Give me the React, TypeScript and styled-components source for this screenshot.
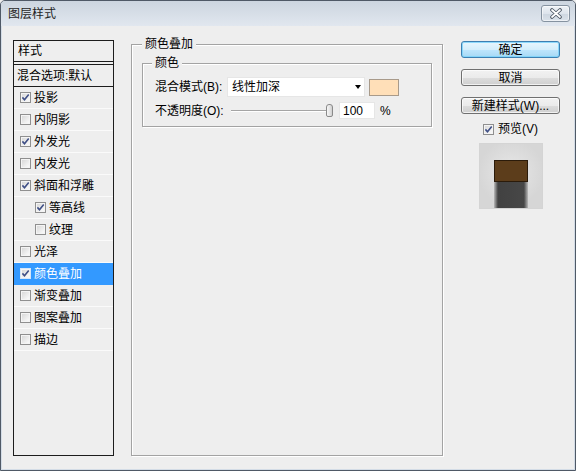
import React from "react";
import styled, { createGlobalStyle } from "styled-components";

const FONT = `"Liberation Sans", "Noto Sans CJK SC", sans-serif`;

const GlobalStyle = createGlobalStyle`
  html, body { margin: 0; padding: 0; background: #eeeeee; }
  body {
    width: 576px; height: 471px; overflow: hidden;
    font-family: ${FONT}; font-size: 12px; color: #000;
  }
  * { box-sizing: border-box; }
`;

const Window = styled.div`
  width: 576px;
  height: 471px;
  display: flex;
  flex-direction: column;
  border: 1px solid #4f5966;
  border-radius: 5px 5px 0 0;
  background: #d3dce6;
  overflow: hidden;
`;

const TitleBar = styled.div`
  height: 25px;
  flex: none;
  display: flex;
  align-items: flex-start;
  justify-content: space-between;
  padding: 0 5px 0 7px;
  background: linear-gradient(#ccd5df, #e1e7ef);
`;

const Title = styled.span`
  margin-top: 6px;
  line-height: 14px;
  font-size: 12px;
  color: #1f1f1f;
`;

const CloseButton = styled.div`
  margin-top: 4px;
  width: 29px;
  height: 17px;
  display: flex;
  align-items: center;
  justify-content: center;
  border: 1px solid #8592a0;
  border-radius: 3px;
  background: linear-gradient(#eef2f6, #dde4ec 50%, #cdd6e0 51%, #dae2ea);
  box-shadow: inset 0 0 0 1px rgba(255, 255, 255, 0.55);
`;

const Body = styled.div`
  flex: 1;
  margin: 0 1px 1px 1px;
  display: flex;
  align-items: stretch;
  padding: 0 0 13px 11px;
  background: #eeeeee;
`;

/* ---------- style list ---------- */

const StyleList = styled.div`
  margin-top: 14px;
  width: 101px;
  flex: none;
  display: flex;
  flex-direction: column;
  border: 1px solid #1c1c1c;
  background: #eeeeee;
`;

const ListHeader = styled.div`
  height: 21px;
  flex: none;
  display: flex;
  align-items: center;
  padding-left: 4px;
  border-bottom: 1px solid #1c1c1c;
  margin-bottom: 2px;
  line-height: 14px;
`;

const ListBody = styled.div`
  border-top: 1px solid #1c1c1c;
  display: flex;
  flex-direction: column;
`;

const BlendRow = styled.div`
  height: 22px;
  display: flex;
  align-items: center;
  padding-left: 3px;
  border-bottom: 1px solid #1c1c1c;
  line-height: 14px;
  white-space: nowrap;
`;

const ItemRow = styled.div<{ $indent?: boolean; $active?: boolean }>`
  height: 22px;
  display: flex;
  align-items: center;
  gap: 3px;
  padding-left: ${(p) => (p.$indent ? 21 : 6)}px;
  border-bottom: 1px solid ${(p) => (p.$active ? "#3399ff" : "#fafafa")};
  background: ${(p) => (p.$active ? "#3399ff" : "transparent")};
  color: ${(p) => (p.$active ? "#ffffff" : "#000000")};
  line-height: 14px;
  white-space: nowrap;
`;

const Box = styled.span<{ $light?: boolean }>`
  width: 11px;
  height: 11px;
  flex: none;
  display: flex;
  align-items: center;
  justify-content: center;
  border: 1px solid ${(p) => (p.$light ? "#d6e6f8" : "#8f8f8f")};
  background: linear-gradient(135deg, #d4d4d4, #f6f6f6 80%);
  box-shadow: inset 0 0 0 1px #f4f4f4;
`;

const CheckBox: React.FC<{ checked?: boolean; light?: boolean }> = ({
  checked,
  light,
}) => (
  <Box $light={light}>
    {checked && (
      <svg width="9" height="9" viewBox="0 0 9 9">
        <path
          d="M1.4 4.4 L3.5 6.7 L7.7 1.6"
          fill="none"
          stroke="#3f4f86"
          strokeWidth="1.6"
        />
      </svg>
    )}
  </Box>
);

/* ---------- centre panel ---------- */

const Group = styled.fieldset`
  margin: 11px 0 0 17px;
  width: 312px;
  flex: none;
  min-width: 0;
  padding: 0 10px 0 10px;
  border: 1px solid #a3a3a3;
  box-shadow: inset 1px 1px 0 #ffffff, 1px 1px 0 #ffffff;
  display: flex;
  flex-direction: column;
`;

const Legend = styled.legend<{ $shift?: number }>`
  padding: 0 3px;
  margin-left: ${(p) => p.$shift ?? 0}px;
  line-height: 14px;
  background: #eeeeee;
`;

const SubGroup = styled.fieldset`
  margin: 5px 0 0 0;
  min-width: 0;
  padding: 7px 0 7px 12px;
  border: 1px solid #a3a3a3;
  box-shadow: inset 1px 1px 0 #ffffff, 1px 1px 0 #ffffff;
  display: flex;
  flex-direction: column;
  gap: 5px;
`;

const FieldRow = styled.div<{ $h: number }>`
  height: ${(p) => p.$h}px;
  display: flex;
  align-items: center;
`;

const FieldLabel = styled.span`
  width: 72px;
  flex: none;
  line-height: 14px;
  white-space: nowrap;
`;

const Select = styled.div`
  width: 138px;
  height: 20px;
  display: flex;
  align-items: center;
  justify-content: space-between;
  padding: 0 3px 0 4px;
  background: #ffffff;
  border: 1px solid #e6e6e6;
  line-height: 14px;
`;

const Caret = styled.span`
  width: 0;
  height: 0;
  border-left: 3.5px solid transparent;
  border-right: 3.5px solid transparent;
  border-top: 4px solid #000;
`;

const Swatch = styled.div<{ $color: string }>`
  margin-left: 4px;
  width: 30px;
  height: 17px;
  border: 1px solid #a89a8a;
  background: ${(p) => p.$color};
`;

const Slider = styled.div`
  width: 106px;
  height: 17px;
  display: flex;
  align-items: center;
  padding-left: 4px;
`;

const Track = styled.div`
  width: 97px;
  height: 2px;
  border-top: 1px solid #a5a5a5;
  border-bottom: 1px solid #ffffff;
`;

const Thumb = styled.div`
  margin-left: -2px;
  width: 7px;
  height: 13px;
  border: 1px solid #8a8a8a;
  border-radius: 3px 3px 2px 2px;
  background: linear-gradient(90deg, #f7f7f7, #e2e2e2 60%, #cfcfcf);
`;

const NumberBox = styled.div`
  margin-left: 6px;
  width: 36px;
  height: 17px;
  display: flex;
  align-items: center;
  padding-left: 3px;
  background: #ffffff;
  border: 1px solid #e6e6e6;
  line-height: 14px;
`;

const Unit = styled.span`
  margin-left: 5px;
  line-height: 14px;
`;

/* ---------- right column ---------- */

const Side = styled.div`
  margin: 15px 0 0 18px;
  width: 99px;
  flex: none;
  display: flex;
  flex-direction: column;
  align-items: center;
`;

const Button = styled.div<{ $primary?: boolean }>`
  width: 99px;
  height: 17px;
  margin-bottom: 11px;
  display: flex;
  align-items: center;
  justify-content: center;
  border: 1px solid ${(p) => (p.$primary ? "#3c7fb1" : "#707070")};
  border-radius: 3px;
  background: ${(p) =>
    p.$primary
      ? "linear-gradient(#e8f6fd, #d4eefb 50%, #bee6fd 51%, #a7d9f5)"
      : "linear-gradient(#f2f2f2, #ebebeb 50%, #dddddd 51%, #cfcfcf)"};
  box-shadow: inset 0 0 0 1px
    ${(p) => (p.$primary ? "rgba(120, 210, 250, 0.8)" : "rgba(255,255,255,0.7)")};
  line-height: 14px;
  white-space: nowrap;
`;

const PreviewToggle = styled.div`
  align-self: stretch;
  margin-top: -3px;
  height: 14px;
  display: flex;
  align-items: center;
  gap: 4px;
  padding-left: 22px;
  line-height: 14px;
`;

const PreviewFrame = styled.div`
  margin-top: 7px;
  width: 64px;
  height: 66px;
  display: flex;
  flex-direction: column;
  align-items: center;
  padding-top: 16px;
  overflow: hidden;
  border: 1px solid #d4d4d4;
  background: radial-gradient(circle at 50% 45%, #e8e8e8, #d6d6d6 70%);
`;

const Tile = styled.div`
  position: relative;
  z-index: 1;
  width: 34px;
  height: 33px;
  border: 1px solid #2b1b0a;
  background: #5c3d1b;
`;

const TileShadow = styled.div`
  margin-top: -4px;
  width: 34px;
  height: 30px;
  flex: none;
  background: linear-gradient(
    90deg,
    rgba(60, 60, 60, 0.2),
    #414141 4px,
    #474747 calc(100% - 4px),
    rgba(60, 60, 60, 0.2)
  );
  filter: blur(0.6px);
`;

const effects: { label: string; checked?: boolean; indent?: boolean; active?: boolean }[] = [
  { label: "投影", checked: true },
  { label: "内阴影" },
  { label: "外发光", checked: true },
  { label: "内发光" },
  { label: "斜面和浮雕", checked: true },
  { label: "等高线", checked: true, indent: true },
  { label: "纹理", indent: true },
  { label: "光泽" },
  { label: "颜色叠加", checked: true, active: true },
  { label: "渐变叠加" },
  { label: "图案叠加" },
  { label: "描边" },
];

export default function App() {
  return (
    <>
      <GlobalStyle />
      <Window>
        <TitleBar>
          <Title>图层样式</Title>
          <CloseButton>
            <svg width="14" height="11" viewBox="0 0 14 11">
              <path
                d="M3 2 L11 9 M11 2 L3 9"
                stroke="#4a5562"
                strokeWidth="3.6"
                strokeLinecap="round"
              />
              <path
                d="M3 2 L11 9 M11 2 L3 9"
                stroke="#ffffff"
                strokeWidth="1.8"
                strokeLinecap="round"
              />
            </svg>
          </CloseButton>
        </TitleBar>
        <Body>
          <StyleList>
            <ListHeader>样式</ListHeader>
            <ListBody>
              <BlendRow>混合选项:默认</BlendRow>
              {effects.map((e) => (
                <ItemRow key={e.label} $indent={e.indent} $active={e.active}>
                  <CheckBox checked={e.checked} light={e.active} />
                  <span>{e.label}</span>
                </ItemRow>
              ))}
            </ListBody>
          </StyleList>

          <Group>
            <Legend>颜色叠加</Legend>
            <SubGroup>
              <Legend $shift={-3}>颜色</Legend>
              <FieldRow $h={20}>
                <FieldLabel>混合模式(B):</FieldLabel>
                <Select>
                  <span>线性加深</span>
                  <Caret />
                </Select>
                <Swatch $color="#ffdfb8" />
              </FieldRow>
              <FieldRow $h={17}>
                <FieldLabel>不透明度(O):</FieldLabel>
                <Slider>
                  <Track />
                  <Thumb />
                </Slider>
                <NumberBox>100</NumberBox>
                <Unit>%</Unit>
              </FieldRow>
            </SubGroup>
          </Group>

          <Side>
            <Button $primary>确定</Button>
            <Button>取消</Button>
            <Button>新建样式(W)...</Button>
            <PreviewToggle>
              <CheckBox checked />
              <span>预览(V)</span>
            </PreviewToggle>
            <PreviewFrame>
              <Tile />
              <TileShadow />
            </PreviewFrame>
          </Side>
        </Body>
      </Window>
    </>
  );
}
